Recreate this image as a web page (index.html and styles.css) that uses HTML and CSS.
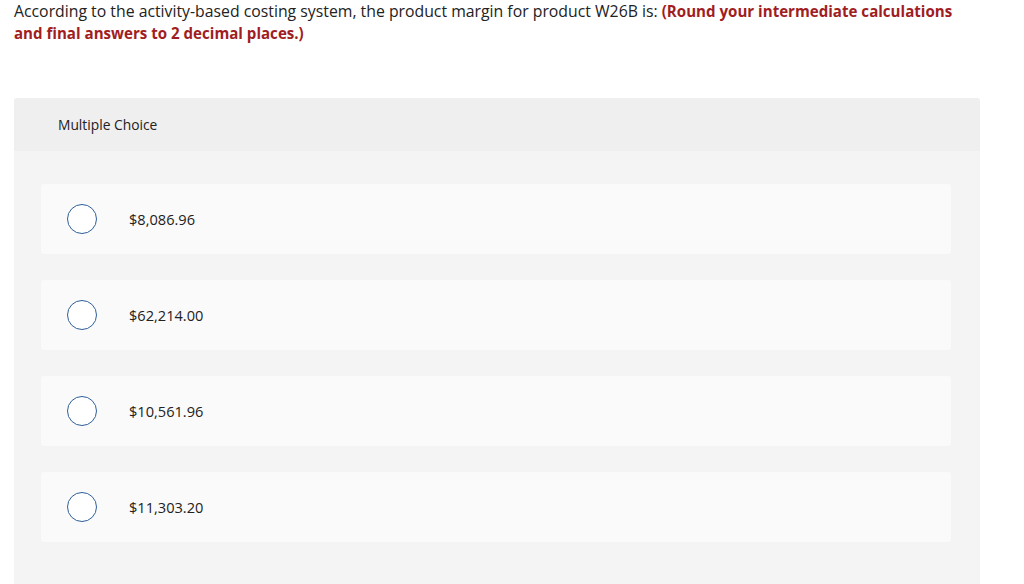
FILE: index.html
```html
<!DOCTYPE html>
<html>
<head>
<meta charset="utf-8">
<link rel="stylesheet" href="styles.css">
</head>
<body>
<p class="question">According to the activity-based costing system, the product margin for product W26B is: <strong class="hint">(Round your intermediate calculations</strong> <strong class="hint">and final answers to 2 decimal places.)</strong></p>
<section class="panel">
  <div class="panel-head">Multiple Choice</div>
  <ul class="options">
    <li class="option"><span class="radio"></span><span class="label">$8,086.96</span></li>
    <li class="option"><span class="radio"></span><span class="label">$62,214.00</span></li>
    <li class="option"><span class="radio"></span><span class="label">$10,561.96</span></li>
    <li class="option"><span class="radio"></span><span class="label">$11,303.20</span></li>
  </ul>
</section>
</body>
</html>
```
FILE: styles.css
```css
html, body {
  margin: 0;
  padding: 0;
  background: #ffffff;
}
body {
  padding: 0 14px;
  font-family: "Open Sans", "Liberation Sans", sans-serif;
  color: #222;
}
.question {
  margin: 0;
  width: 962px;
  font-size: 15.8px;
  line-height: 22px;
  color: #222;
}
.hint {
  color: #a01d22;
  font-weight: 700;
  font-size: 15.1px;
}
.panel {
  margin-top: 54px;
  width: 966px;
  background: #f4f4f4;
  border-radius: 3px 3px 0 0;
  padding-bottom: 50px;
}
.panel-head {
  height: 53px;
  background: #efefef;
  border-radius: 3px 3px 0 0;
  padding-left: 44px;
  display: flex;
  align-items: center;
  font-size: 13.8px;
  color: #222;
}
.options {
  list-style: none;
  margin: 0;
  padding: 33px 29px 0 27px;
  display: flex;
  flex-direction: column;
  gap: 26px;
}
.option {
  height: 70px;
  background: #fafafa;
  border-radius: 3px;
  display: flex;
  align-items: center;
  padding-left: 26px;
}
.radio {
  width: 28px;
  height: 28px;
  border: 1px solid #2f5f99;
  border-radius: 50%;
  background: #fff;
  flex: none;
}
.label {
  margin-left: 32px;
  font-size: 14.6px;
  color: #222;
}
```
